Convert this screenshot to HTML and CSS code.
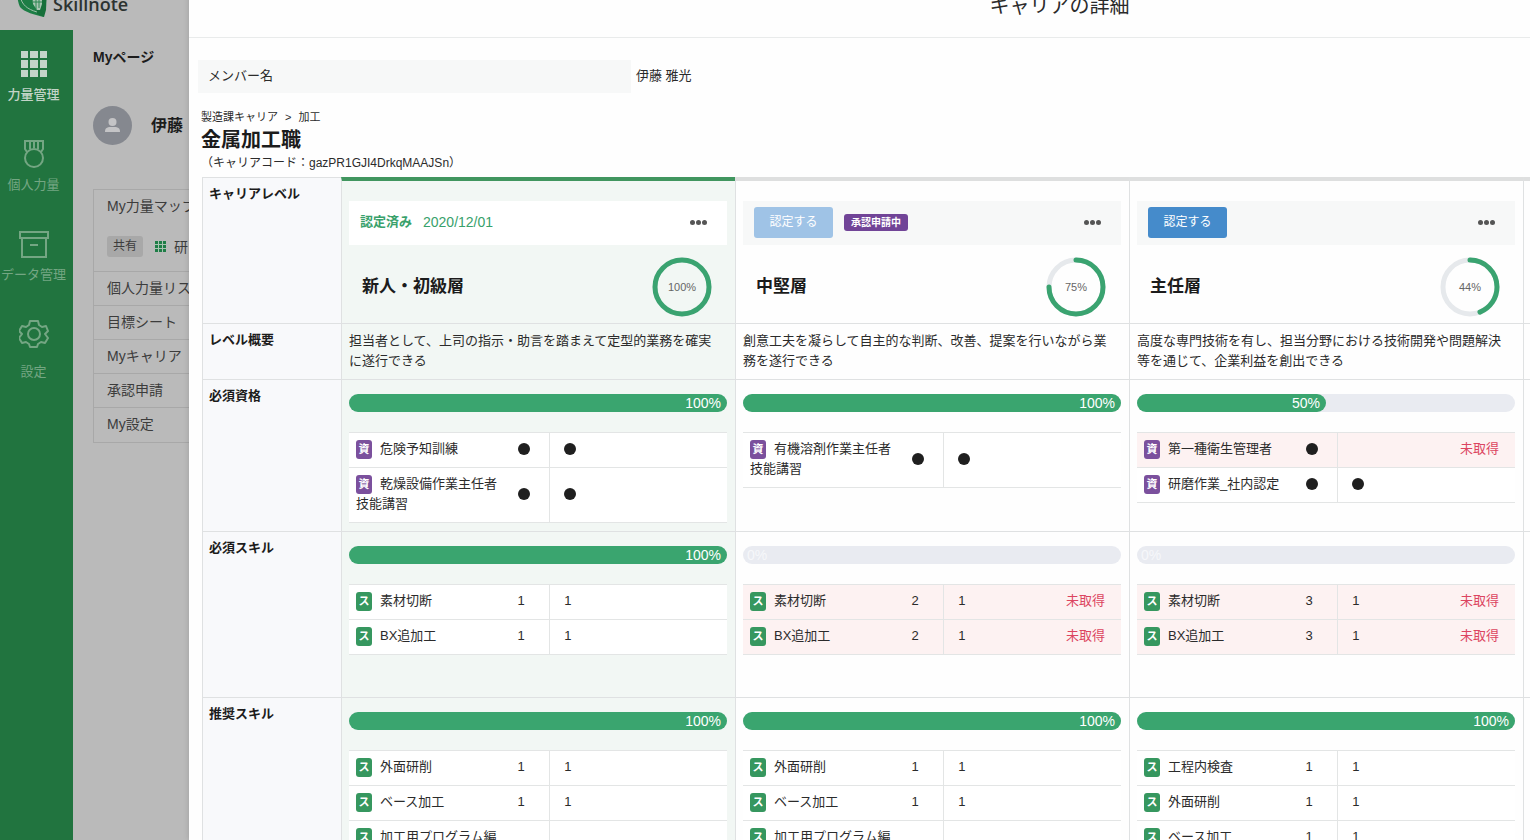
FILE: index.html
```html
<!DOCTYPE html>
<html lang="ja">
<head>
<meta charset="utf-8">
<title>Skillnote - キャリアの詳細</title>
<link rel="stylesheet" href="styles.css">
</head>
<body>
<div class="app">
  <header class="topbar">
    <svg class="logo" width="32" height="34" viewBox="0 0 32 34" aria-hidden="true">
      <path d="M0 3 L19 0 L27 34 C18 32 7 29 3 24 C1 20 0 14 0 3 Z" fill="#1d7d45"/>
      <path d="M3 13 C5 22 10 26 20 29" stroke="#9dbfa9" stroke-width="1" fill="none"/>
      <path d="M19 2 L30 6 L29 27 L27 34 L20 31 Z" fill="#17703b"/>
      <path d="M15 8 h10 v13 l-2 6 h-3 l-4-6 z" fill="#a9c5b2"/>
      <path d="M15 14 h10 M16 19 h9 M19 8 v18 M22 8 v17" stroke="#2a8650" stroke-width="1"/>
    </svg>
    <span class="brand">Skillnote</span>
  </header>
  <div class="shell">
    <nav class="sidebar">
      <a class="nav-item nav-item--active" href="#">
        <svg width="28" height="28" viewBox="0 0 28 28" fill="currentColor"><path d="M1 1h7v7H1zM10 1h8v7h-8zM20 1h7v7h-7zM1 10h7v8H1zM10 10h8v8h-8zM20 10h7v8h-7zM1 20h7v7H1zM10 20h8v7h-8zM20 20h7v7h-7z"/></svg>
        <span>力量管理</span>
      </a>
      <a class="nav-item" href="#">
        <svg width="28" height="28" viewBox="0 0 28 28" fill="none" stroke="currentColor" stroke-width="2"><circle cx="14" cy="18" r="9"/><path d="M7 12L5 9V1h18v8l-2 3M10 1v8M14 1v7M18 1v8"/></svg>
        <span>個人力量</span>
      </a>
      <a class="nav-item" href="#">
        <svg width="30" height="28" viewBox="0 0 30 28" fill="none" stroke="currentColor" stroke-width="2"><path d="M1 2h28v6H1zM3 8v19h24V8M11 15h8"/></svg>
        <span>データ管理</span>
      </a>
      <a class="nav-item nav-item--settings" href="#">
        <svg width="30" height="28" viewBox="0 0 30 28" fill="none" stroke="currentColor" stroke-width="2" stroke-linejoin="round"><path d="M11 1h8l1 4 3 2 4-1 2 5-3 3 3 4-3 5-4-1-3 2-1 3h-7l-1-3-3-2-4 1-3-5 3-4-3-3 3-5 4 1 3-2z"/><circle cx="15" cy="14" r="6"/></svg>
        <span>設定</span>
      </a>
    </nav>
    <main class="mypage">
      <h2 class="mypage-title">Myページ</h2>
      <div class="profile">
        <svg width="39" height="39" viewBox="0 0 39 39" aria-hidden="true"><circle cx="19.500" cy="19.500" r="19.500" fill="#85888f"/><circle cx="19.500" cy="16" r="4" fill="#c4c4c6"/><path d="M12 26c0-5 3-5 7.500-5s7.500 0 7.500 5z" fill="#c4c4c6"/></svg>
        <strong>伊藤</strong>
      </div>
      <ul class="menu">
        <li class="menu-group">
          <a href="#">My力量マップ</a>
          <div class="shared"><span class="shared-tag">共有</span>
            <svg width="11" height="11" viewBox="0 0 11 11" aria-hidden="true"><path d="M0 0h11v11H0z" fill="#1f7d47"/><path d="M0 3.500h11M0 7.500h11M3.500 0v11M7.500 0v11" stroke="#a9c3b2"/></svg>
            <span>研</span></div>
        </li>
        <li><a href="#">個人力量リスト</a></li>
        <li><a href="#">目標シート</a></li>
        <li><a href="#">Myキャリア</a></li>
        <li><a href="#">承認申請</a></li>
        <li><a href="#">My設定</a></li>
      </ul>
    </main>
  </div>

  <section class="modal" role="dialog" aria-labelledby="dialog-title">
    <header class="modal-header"><h1 id="dialog-title">キャリアの詳細</h1></header>
    <div class="modal-body">
      <dl class="member"><dt>メンバー名</dt><dd>伊藤 雅光</dd></dl>
      <div class="career">
        <p class="crumbs"><span>製造課キャリア</span><span>&gt;</span><span>加工</span></p>
        <h2 class="career-name">金属加工職</h2>
        <p class="career-code">（キャリアコード：gazPR1GJI4DrkqMAAJSn）</p>
      </div>
      <table class="levels">
        <colgroup><col class="c-label"><col><col><col><col class="c-next"></colgroup>
        <tr class="row-level">
          <th scope="row">キャリアレベル</th>
          <td class="done">
            <div class="status"><strong class="certified">認定済み</strong><span class="date">2020/12/01</span><button class="more" aria-label="メニュー"><i></i><i></i><i></i></button></div>
            <div class="level"><h3>新人・初級層</h3>
              <div class="ring"><svg viewBox="0 0 60 60"><circle class="track" cx="30" cy="30" r="27"/><circle class="value" cx="30" cy="30" r="27" pathLength="100" stroke-dasharray="100 0"/></svg><span>100%</span></div></div>
          </td>
          <td>
            <div class="status"><button class="certify" disabled>認定する</button><span class="pending">承認申請中</span><button class="more" aria-label="メニュー"><i></i><i></i><i></i></button></div>
            <div class="level"><h3>中堅層</h3>
              <div class="ring"><svg viewBox="0 0 60 60"><circle class="track" cx="30" cy="30" r="27"/><circle class="value" cx="30" cy="30" r="27" pathLength="100" stroke-dasharray="75 100"/></svg><span>75%</span></div></div>
          </td>
          <td>
            <div class="status"><button class="certify">認定する</button><button class="more" aria-label="メニュー"><i></i><i></i><i></i></button></div>
            <div class="level"><h3>主任層</h3>
              <div class="ring"><svg viewBox="0 0 60 60"><circle class="track" cx="30" cy="30" r="27"/><circle class="value" cx="30" cy="30" r="27" pathLength="100" stroke-dasharray="44 100"/></svg><span>44%</span></div></div>
          </td>
          <td></td>
        </tr>
        <tr class="row-summary">
          <th scope="row">レベル概要</th>
          <td class="done">担当者として、上司の指示・助言を踏まえて定型的業務を確実に遂行できる</td>
          <td>創意工夫を凝らして自主的な判断、改善、提案を行いながら業務を遂行できる</td>
          <td>高度な専門技術を有し、担当分野における技術開発や問題解決等を通じて、企業利益を創出できる</td>
          <td></td>
        </tr>
        <tr class="row-items">
          <th scope="row">必須資格</th>
          <td class="done">
            <div class="bar"><div class="fill" style="width:100%">100%</div></div>
            <table class="items">
              <tr><td><b class="tag tag--cert">資</b>危険予知訓練</td><td><i class="dot"></i></td><td><i class="dot"></i></td><td></td></tr>
              <tr><td><b class="tag tag--cert">資</b>乾燥設備作業主任者技能講習</td><td><i class="dot"></i></td><td><i class="dot"></i></td><td></td></tr>
            </table>
          </td>
          <td>
            <div class="bar"><div class="fill" style="width:100%">100%</div></div>
            <table class="items">
              <tr><td><b class="tag tag--cert">資</b>有機溶剤作業主任者技能講習</td><td><i class="dot"></i></td><td><i class="dot"></i></td><td></td></tr>
            </table>
          </td>
          <td>
            <div class="bar"><div class="fill" style="width:50%">50%</div></div>
            <table class="items">
              <tr class="missing"><td><b class="tag tag--cert">資</b>第一種衛生管理者</td><td><i class="dot"></i></td><td></td><td>未取得</td></tr>
              <tr><td><b class="tag tag--cert">資</b>研磨作業_社内認定</td><td><i class="dot"></i></td><td><i class="dot"></i></td><td></td></tr>
            </table>
          </td>
          <td></td>
        </tr>
        <tr class="row-items row-items--skills">
          <th scope="row">必須スキル</th>
          <td class="done">
            <div class="bar"><div class="fill" style="width:100%">100%</div></div>
            <table class="items">
              <tr><td><b class="tag">ス</b>素材切断</td><td>1</td><td>1</td><td></td></tr>
              <tr><td><b class="tag">ス</b>BX追加工</td><td>1</td><td>1</td><td></td></tr>
            </table>
          </td>
          <td>
            <div class="bar"><div class="fill fill--zero" style="width:0%">0%</div></div>
            <table class="items">
              <tr class="missing"><td><b class="tag">ス</b>素材切断</td><td>2</td><td>1</td><td>未取得</td></tr>
              <tr class="missing"><td><b class="tag">ス</b>BX追加工</td><td>2</td><td>1</td><td>未取得</td></tr>
            </table>
          </td>
          <td>
            <div class="bar"><div class="fill fill--zero" style="width:0%">0%</div></div>
            <table class="items">
              <tr class="missing"><td><b class="tag">ス</b>素材切断</td><td>3</td><td>1</td><td>未取得</td></tr>
              <tr class="missing"><td><b class="tag">ス</b>BX追加工</td><td>3</td><td>1</td><td>未取得</td></tr>
            </table>
          </td>
          <td></td>
        </tr>
        <tr class="row-items">
          <th scope="row">推奨スキル</th>
          <td class="done">
            <div class="bar"><div class="fill" style="width:100%">100%</div></div>
            <table class="items">
              <tr><td><b class="tag">ス</b>外面研削</td><td>1</td><td>1</td><td></td></tr>
              <tr><td><b class="tag">ス</b>ベース加工</td><td>1</td><td>1</td><td></td></tr>
              <tr><td><b class="tag">ス</b>加工用プログラム編集</td><td>1</td><td>1</td><td></td></tr>
            </table>
          </td>
          <td>
            <div class="bar"><div class="fill" style="width:100%">100%</div></div>
            <table class="items">
              <tr><td><b class="tag">ス</b>外面研削</td><td>1</td><td>1</td><td></td></tr>
              <tr><td><b class="tag">ス</b>ベース加工</td><td>1</td><td>1</td><td></td></tr>
              <tr><td><b class="tag">ス</b>加工用プログラム編集</td><td>1</td><td>1</td><td></td></tr>
            </table>
          </td>
          <td>
            <div class="bar"><div class="fill" style="width:100%">100%</div></div>
            <table class="items">
              <tr><td><b class="tag">ス</b>工程内検査</td><td>1</td><td>1</td><td></td></tr>
              <tr><td><b class="tag">ス</b>外面研削</td><td>1</td><td>1</td><td></td></tr>
              <tr><td><b class="tag">ス</b>ベース加工</td><td>1</td><td>1</td><td></td></tr>
            </table>
          </td>
          <td></td>
        </tr>
      </table>
    </div>
  </section>
</div>
</body>
</html>
```
FILE: styles.css
```css
* { box-sizing: border-box; }
html, body { height: 100%; }
body {
  margin: 0;
  overflow: hidden;
  background: #bababa;
  color: #2b2b2b;
  font: 13px/20px "Liberation Sans", "Noto Sans CJK JP", sans-serif;
}
h1, h2, h3, p, dl, dd, ul { margin: 0; padding: 0; }
a { color: inherit; text-decoration: none; }
button { border: 0; padding: 0; font: inherit; }

/* The view is scrolled down by half of the top bar. */
.app {
  position: relative;
  margin-top: -30px;
  min-height: calc(100% + 30px);
  display: flex;
  flex-direction: column;
}

.topbar {
  height: 60px;
  display: flex;
  align-items: center;
  gap: 4px;
  padding: 8px 0 0 17px;
}
.topbar .logo { margin-top: -8px; }
.brand {
  font: 600 18px/24px "Open Sans", sans-serif;
  color: #2c3230;
}

.shell { flex: 1; display: flex; }

.sidebar { width: 73px; flex: none; background: #21743f; }
.nav-item {
  height: 90px;
  padding-top: 20px;
  display: flex;
  flex-direction: column;
  align-items: center;
  gap: 7px;
  color: #74a683;
  white-space: nowrap;
  padding-right: 6px;
}
.nav-item svg { flex: none; }
.nav-item--active { color: #c3d4c8; font-weight: 500; }
.nav-item--settings { gap: 14px; }

.mypage { flex: 1; padding: 17px 0 0 20px; }
.mypage-title { font-size: 14px; line-height: 20px; color: #1c1c1c; }
.profile {
  display: flex;
  align-items: center;
  gap: 19px;
  margin: 39px 0 44px;
  font-size: 16px;
  color: #1c1c1c;
}
.menu {
  list-style: none;
  border: 1px solid #a8a8a8;
  font-size: 14px;
  color: #3c3c3c;
}
.menu li { height: 34px; border-bottom: 1px solid #a8a8a8; }
.menu li:last-child { border-bottom: 0; }
.menu a { display: block; padding: 6px 13px; }
.menu .menu-group { height: 82px; }
.shared { display: flex; align-items: center; gap: 8px; padding: 14px 0 0 13px; }
.shared-tag {
  width: 36px;
  margin-right: 4px;
  border-radius: 3px;
  background: #a8a8a8;
  text-align: center;
  font-size: 12px;
  line-height: 21px;
}

/* Slides in over the page and leaves its left edge in view. */
.modal {
  position: absolute;
  inset: 0 0 0 189px;
  background: #fefefe;
  box-shadow: 0 0 6px rgba(0, 0, 0, .15);
}
.modal-header {
  height: 68px;
  padding-top: 22px;
  padding-left: 400px;
  border-bottom: 1px solid #e9ebeb;
  text-align: center;
}
.modal-header h1 { font-size: 20px; line-height: 28px; font-weight: 400; }
.modal-body { padding: 22px 0 0 9px; }

.member { display: flex; align-items: center; gap: 5px; }
.member dt { width: 433px; padding: 6px 10px 7px; background: #f7f8f8; }
.member dd { padding-bottom: 2px; }

.career { padding: 14px 0 4px 3px; }
.crumbs { display: flex; gap: 7px; font-size: 11px; line-height: 20px; }
.career-code { font-size: 12px; line-height: 20px; }
.career-name { font-size: 20px; line-height: 26px; color: #1c1c1c; }

.levels {
  width: calc(100% - 4px);
  margin-left: 4px;
  table-layout: fixed;
  border-collapse: separate;
  border-spacing: 0;
}
.c-label { width: 139px; }
.c-next { width: 7px; }
.levels > tbody > tr > th {
  padding: 6px;
  border-left: 1px solid #dfe1e2;
  border-bottom: 1px solid #dfe1e2;
  background: #f8f9fb;
  text-align: left;
  vertical-align: top;
  color: #1c1c1c;
}
.levels > tbody > tr > td {
  padding: 7px 8px 8px 7px;
  border-left: 1px solid #dfe1e2;
  border-bottom: 1px solid #dfe1e2;
  vertical-align: top;
}
.levels > tbody > tr > td.done { background: #f2f7f4; }
.levels > tbody > .row-summary > td { padding-right: 14px; }
.levels > tbody > tr > td:last-child { padding: 0; }
.levels > tbody > .row-level > th { border-top: 1px solid #dfe1e2; }
.levels > tbody > .row-level > td { padding: 20px 8px 6px 7px; border-top: 4px solid #dedfdf; }
.levels > tbody > .row-level > td.done { border-top-color: #41965f; }
.levels > tbody > .row-items > td { padding-top: 14px; }
.levels > tbody > .row-items--skills > td { padding-bottom: 42px; }

.status {
  height: 44px;
  display: flex;
  align-items: center;
  gap: 11px;
  padding: 0 20px 2px 11px;
  background: #f7f8f8;
}
.done .status { background: #fff; }
.certified, .date { color: #38a16b; }
.date { font-size: 14px; }
.certify {
  width: 79px;
  height: 31px;
  border-radius: 3px;
  background: #458bcb;
  color: #fff;
  font-size: 12px;
}
.certify:disabled { background: #9fc3e6; }
.pending {
  padding: 0 7px;
  border-radius: 3px;
  background: #714497;
  color: #fff;
  font-size: 10px;
  line-height: 17px;
  font-weight: 700;
}
.more { margin-left: auto; display: flex; gap: 1px; background: none; }
.more i { width: 5px; height: 5px; border-radius: 50%; background: #555; }

.level {
  display: flex;
  align-items: center;
  justify-content: space-between;
  padding: 12px 15px 0 13px;
}
.level h3 { font-size: 17px; line-height: 24px; color: #1c1c1c; }
.ring { display: grid; place-items: center; width: 60px; height: 60px; }
.ring > * { grid-area: 1 / 1; }
.ring svg { width: 60px; height: 60px; transform: rotate(-90deg); }
.ring circle { fill: none; stroke-width: 5; stroke-linecap: round; }
.ring .track { stroke: #e6e9ec; }
.ring .value { stroke: #3aa370; }
.ring span { font-size: 11px; color: #666; }

.bar { height: 18px; margin-bottom: 20px; border-radius: 9px; background: #e9ebf1; }
.fill {
  height: 18px;
  padding-right: 6px;
  border-radius: 9px;
  background: #3aa56f;
  color: #fff;
  font-size: 14px;
  line-height: 18px;
  text-align: right;
}
.fill--zero { padding: 0 0 0 4px; background: none; color: #f6f7fa; text-align: left; }

.items {
  width: 100%;
  table-layout: fixed;
  border-collapse: separate;
  border-spacing: 0;
  border-top: 1px solid #e3e5e5;
  background: #fff;
}
.items td { padding: 6px 0 8px; border-bottom: 1px solid #e3e5e5; }
.items td:nth-child(1) { width: 43%; padding-left: 7px; padding-right: 6px; }
.items td:nth-child(2) { width: 10%; padding-left: 6px; }
.items td:nth-child(3) { width: 20%; padding-left: 14px; border-left: 1px solid #e3e5e5; }
.items td:nth-child(4) { padding-right: 16px; text-align: right; color: #dc4560; }
.missing { background: #fdf2f2; }
.tag {
  display: inline-block;
  width: 16px;
  margin-right: 8px;
  border-radius: 3px;
  background: #36975f;
  color: #fff;
  font-size: 11px;
  line-height: 19px;
  text-align: center;
}
.tag--cert { background: #7b509d; }
.dot { display: block; width: 12px; height: 12px; border-radius: 50%; background: #1f1f1f; }
```
